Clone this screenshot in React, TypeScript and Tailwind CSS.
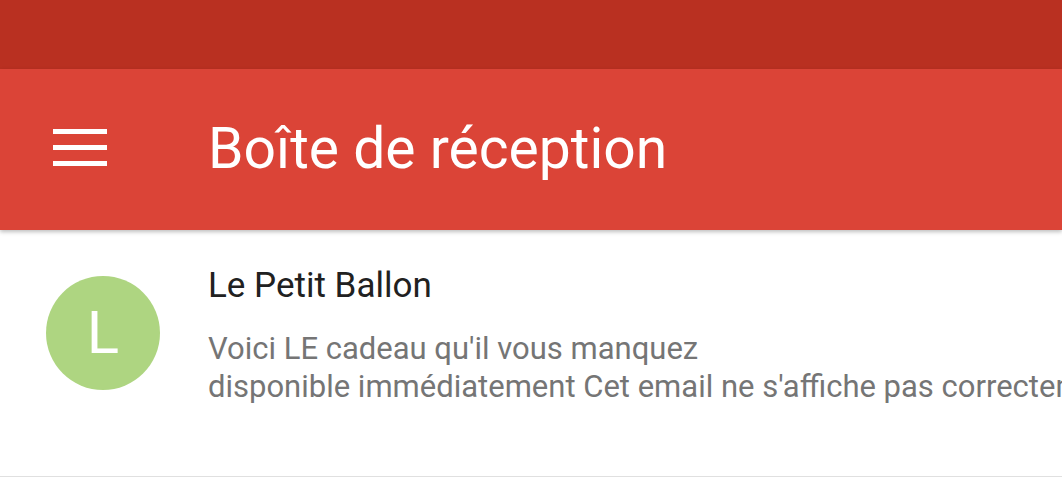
import React from 'react';

const FONT = "font-['Roboto','Noto_Sans',sans-serif]";

function MenuIcon() {
  return (
    <div className="flex w-[54px] flex-col gap-[11px]">
      <div className="h-[5px] w-full bg-white" />
      <div className="h-[5px] w-full bg-white" />
      <div className="h-[5px] w-full bg-white" />
    </div>
  );
}

export default function App() {
  return (
    <div className={`w-[1062px] h-[488px] overflow-hidden bg-white ${FONT}`}>
      {/* Status bar */}
      <div className="h-[69px] bg-[#b93021]" />

      {/* App bar */}
      <div className="relative z-10 flex h-[161px] items-center bg-[#db4437] shadow-[0_2px_4px_rgba(0,0,0,0.25)]">
        <div className="ml-[53px] mt-[-4px]">
          <MenuIcon />
        </div>
        <h1 className="ml-[101px] text-[57px] leading-none text-white mt-[-3px]">Boîte de réception</h1>
      </div>

      {/* Message row */}
      <div className="flex h-[247px] border-b border-[#e0e0e0]">
        <div className="ml-[46px] mt-[46px] flex h-[114px] w-[114px] shrink-0 items-center justify-center rounded-full bg-[#aed581]">
          <span className="text-[60px] leading-none text-white">L</span>
        </div>
        <div className="ml-[48px] mt-[36px] min-w-0 flex-1 overflow-hidden whitespace-nowrap">
          <p className="text-[35px] leading-[40px] text-[#212121]">Le Petit Ballon</p>
          <p className="mt-[24px] text-[31px] leading-[38px] text-[#757575]">Voici LE cadeau qu'il vous manquez</p>
          <p className="text-[31px] leading-[38px] text-[#757575]">disponible immédiatement Cet email ne s'affiche pas correctement ?</p>
        </div>
      </div>
    </div>
  );
}
